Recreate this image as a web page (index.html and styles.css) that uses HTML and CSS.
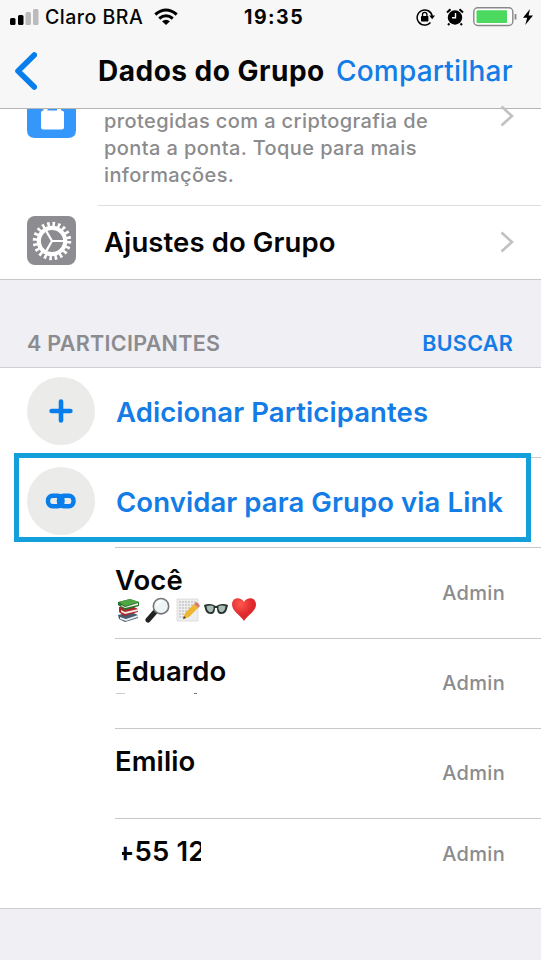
FILE: index.html
```html
<!DOCTYPE html>
<html lang="pt-BR">
<head>
<meta charset="utf-8">
<title>Dados do Grupo</title>
<link rel="stylesheet" href="styles.css">
</head>
<body>
<header class="top">
  <div class="status">
    <svg class="signal" width="29" height="18" viewBox="0 0 29 18"><rect x="0" y="10" width="5.5" height="7" rx="1.5"/><rect x="8" y="7" width="5.5" height="10" rx="1.5"/><rect x="15.5" y="4" width="5.5" height="13" rx="1.5" fill="#bbb"/><rect x="23" y="1" width="5.5" height="16" rx="1.5" fill="#bbb"/></svg>
    <span class="carrier">Claro BRA</span>
    <svg class="wifi" width="24" height="18" viewBox="0 0 24 18" fill="none" stroke="#000" stroke-width="3"><path d="M1.3 6.5Q12-2.5 22.7 6.5M5.2 10.5Q12 5 18.8 10.5"/><path d="M8 13.2Q12 10.2 16 13.2L12 17Z" fill="#000" stroke="none"/></svg>
    <span class="clock">19:35</span>
    <svg class="rotation" width="20" height="18" viewBox="0 0 20 18"><path d="M14.5 14.5A7.6 7.6 0 1 1 16.2 8" fill="none" stroke="#000" stroke-width="1.5"/><path d="M13.2 7.5H19L16.2 11.3Z"/><rect x="5" y="8" width="7.4" height="5.5" rx=".7"/><path d="M6.5 8V6.5a2.2 2.2 0 0 1 4.4 0V8" fill="none" stroke="#000" stroke-width="1.3"/></svg>
    <svg class="alarm" width="18" height="18" viewBox="0 0 18 18"><circle cx="9" cy="9.5" r="7.2"/><path d="M1 4.5L4.5 1.2M17 4.5L13.5 1.2M3.5 15.5L2 17M14.5 15.5L16 17" stroke="#000" stroke-width="2"/><path d="M9.5 5V9.8H6" fill="none" stroke="#fff" stroke-width="1.4"/></svg>
    <svg class="battery" width="45" height="20" viewBox="0 0 45 20"><rect x=".8" y=".8" width="39" height="17.7" rx="4" fill="#fff" stroke="#888" stroke-width="1.4"/><rect x="3.5" y="3.3" width="30.5" height="12.7" rx="1" fill="#4cd95f"/><path d="M42.5 7v5.5" stroke="#888" stroke-width="1.8"/></svg>
    <svg class="bolt" width="10" height="16" viewBox="0 0 10 16"><path d="M7 0L0 8.8H4.2L2.2 16L10 6.5H5.6Z"/></svg>
  </div>
  <nav class="nav">
    <svg class="back" width="24" height="38" viewBox="0 0 24 38"><path d="M21.3 3L5 19L21.3 35" fill="none" stroke="#087eec" stroke-width="5.6" stroke-linecap="round" stroke-linejoin="round"/></svg>
    <h1 class="title">Dados do Grupo</h1>
    <a class="share">Compartilhar</a>
  </nav>
</header>

<section class="settings">
  <div class="setting crypto">
    <svg class="tile" width="49" height="29" viewBox="0 0 49 29"><path d="M0 0H49V21Q49 29 41 29H8Q0 29 0 21Z" fill="#3697fb"/><rect x="14" y="1.5" width="23" height="19" rx="2.5" fill="#fff"/><path d="M18.5 0v3M32 0v3" stroke="#fff" stroke-width="4"/></svg>
    <p class="description">protegidas com a criptografia de<br>ponta a ponta. Toque para mais<br>informações.</p>
    <svg class="chevron" width="14" height="22" viewBox="0 0 14 22"><path d="M1.5 1.5L12 11L1.5 20.5"/></svg>
  </div>
  <div class="setting adjust">
    <svg class="tile" width="49" height="49" viewBox="0 0 49 49"><rect width="49" height="49" rx="8" fill="#8c8c91"/><g fill="none" stroke="#fff"><circle cx="25" cy="25" r="17" stroke-width="4.5" stroke-dasharray="2.55 2.79"/><circle cx="25" cy="25" r="13.2" stroke-width="4.2"/><path d="M25 25H37M25 25L19 14.6M25 25L19 35.4" stroke-width="2.2"/></g></svg>
    <span class="setting-name">Ajustes do Grupo</span>
    <svg class="chevron" width="14" height="22" viewBox="0 0 14 22"><path d="M1.5 1.5L12 11L1.5 20.5"/></svg>
  </div>
</section>

<div class="section-head"><span class="count">4 PARTICIPANTES</span><a class="search">BUSCAR</a></div>

<main class="people">
  <div class="row action">
    <span class="circle"><svg width="24" height="24" viewBox="0 0 24 24"><path d="M12 2.6V21.4M2.6 12H21.4" stroke="#087eec" stroke-width="4.6" stroke-linecap="round"/></svg></span>
    <div class="cell"><a class="add">Adicionar Participantes</a></div>
  </div>
  <div class="row action invite">
    <span class="circle"><svg width="32" height="16" viewBox="0 0 32 16" fill="none" stroke="#087eec" stroke-width="4.4"><rect x="3" y="2.8" width="14.5" height="10.5" rx="4.6"/><rect x="14" y="2.8" width="14.5" height="10.5" rx="4.6"/></svg></span>
    <div class="cell"><a class="link">Convidar para Grupo via Link</a></div>
  </div>
  <div class="row person">
    <div class="cell"><div class="info"><span class="name you">Você</span>
      <svg class="emojis" width="142" height="26" viewBox="0 0 142 26">
        <g transform="translate(2 1)"><path d="M0 17L13 14L20 17V20L7 24L1 21Z" fill="#475a70"/><path d="M2 19L8 21L20 17V19L8 23L2 21Z" fill="#e9ecec"/><path d="M1 9L14 8L20 11V14L6 18L1 14Z" fill="#ad2629"/><path d="M3 12L7 14L20 11V13L7 16L3 14Z" fill="#f2e6df"/><path d="M0 4L12 1L21 4V8L7 12L0 7Z" fill="#27702d"/><path d="M1 4L12 1L21 4L7 8Z" fill="#4fa744"/><path d="M3 7L7 9L20 5V7L7 10L3 8Z" fill="#edf0df"/></g>
        <g transform="translate(30 0)"><path d="M9 15L2 23" stroke="#222" stroke-width="5" stroke-linecap="round"/><circle cx="15" cy="9.2" r="7.7" fill="#edf4f6" stroke="#777" stroke-width="1.6"/><path d="M11 9Q12 4 16 4" fill="none" stroke="#fff" stroke-width="2"/></g>
        <g transform="translate(60 0)"><path d="M1 2H22V24H1Z" fill="#eee" stroke="#ccc" stroke-width=".6"/><path d="M3 5H20M3 8H20M3 11H16M3 14H13M3 17H10M3 20H8" stroke="#aaa" stroke-width=".9" stroke-dasharray="2 1"/><path d="M7 22L9 16L18 7L22 11L13 20Z" fill="#eeb633"/><path d="M18 7L20 5Q23 6 24 9L22 11Z" fill="#db7c6f"/><path d="M7 22L8 19L10 21Z" fill="#443a25"/></g>
        <g transform="translate(87 6)"><path d="M1 2Q6 0 11 2Q13 4 15 2Q20 0 25 2L24 6Q23 11 18 11Q14 11 14 5H12Q12 11 8 11Q3 11 2 6Z" fill="#26332f"/><path d="M3.5 3Q7 2 10.5 3Q11 9 7.5 9.3Q4 9 3.5 3ZM15.5 3Q19 2 22.5 3Q22 9 18.5 9.3Q15 9 15.5 3Z" fill="#a9bdb5"/></g>
        <defs><radialGradient id="heart" cx="35%" cy="25%"><stop stop-color="#ff5750"/><stop offset="1" stop-color="#df282c"/></radialGradient></defs>
        <path d="M128 24C124 18 116 14 116 7.5C116 0 125-.5 128 5C131-.5 140 0 140 7.5C140 14 132 18 128 24Z" fill="url(#heart)"/>
      </svg></div><span class="role">Admin</span></div>
  </div>
  <div class="row person">
    <div class="cell"><div class="info"><span class="name eduardo">Eduardo</span><svg class="trace" width="90" height="4" viewBox="0 0 90 4"><path d="M1 1.5h9" stroke="#ccc"/><path d="M79 1.5h3" stroke="#777"/></svg></div><span class="role">Admin</span></div>
  </div>
  <div class="row person">
    <div class="cell"><div class="info"><span class="name emilio">Emilio</span></div><span class="role">Admin</span></div>
  </div>
  <div class="row person last">
    <div class="cell"><div class="info"><span class="phone"><span class="number">+55 12</span></span></div><span class="role">Admin</span></div>
  </div>
</main>
</body>
</html>
```
FILE: styles.css
```css
*, *::after { box-sizing: border-box; }
body { margin: 0; width: 541px; height: 960px; overflow: hidden; background: #efeff4; color: #050505; font-family: Inter, "Liberation Sans", sans-serif; font-weight: 600; }
svg { display: block; flex: none; }
h1, p { margin: 0; }
span, a, h1 { white-space: nowrap; }

.top { height: 109px; background: #f7f7f7; border-bottom: 1px solid #b5b5b7; }
.status { height: 34px; display: flex; align-items: center; padding-left: 10px; }
.carrier { width: 100px; margin-left: 6px; font-size: 19.5px; font-weight: 500; letter-spacing: .5px; }
.wifi { margin-left: 9px; }
.clock { width: 60px; margin-left: 66px; font-size: 19.5px; font-weight: 700; letter-spacing: 1.5px; }
.rotation { margin-left: 112px; }
.alarm { margin-left: 10px; }
.battery { margin-left: 9px; }
.bolt { margin-left: 5px; }
.nav { height: 74px; display: flex; align-items: center; padding-left: 13px; }
.back { margin-top: -1px; }
.title { width: 227px; margin-left: 61px; font-size: 28px; font-weight: 700; letter-spacing: .5px; }
.share { margin-left: 11px; color: #137ce6; font-size: 28px; font-weight: 500; letter-spacing: .2px; }

.settings { height: 171px; background: #fff; border-bottom: 1px solid #c8c7cc; }
.setting { display: flex; padding-left: 27px; }
.crypto { height: 96px; }
.description { width: 375px; margin-left: 28px; margin-top: -1px; color: #8b8b8d; font-size: 20px; font-weight: 500; line-height: 27px; letter-spacing: .4px; }
.chevron { margin-left: 21px; fill: none; stroke: #c1c1c5; stroke-width: 2.6; }
.crypto .chevron { margin-top: -4px; }
.adjust { height: 72px; align-items: center; margin-left: 98px; padding-left: 0; border-top: 1px solid #dedee1; }
.adjust .tile { margin-left: -71px; margin-top: -3px; }
.setting-name { width: 375px; margin-left: 28px; font-size: 27.5px; letter-spacing: .1px; }

.section-head { height: 88px; display: flex; justify-content: space-between; align-items: flex-end; padding: 0 28px 10px 27px; border-bottom: 1px solid #cfced3; font-size: 21.5px; line-height: 27px; letter-spacing: .3px; }
.count { color: #8b8b90; }
.search { color: #137ce6; }

.people { height: 541px; background: #fff; border-bottom: 1px solid #cfced3; }
.row { display: flex; padding-left: 115px; height: 90.2px; }
.action { padding-left: 27px; align-items: stretch; }
.circle { width: 68px; height: 68px; margin-top: 9px; margin-right: 20px; flex: none; border-radius: 50%; background: #ebebe9; display: flex; align-items: center; justify-content: center; }
.cell { flex: 1; display: flex; justify-content: space-between; align-items: center; border-bottom: 1px solid #c8c7cc; }
.action a { margin-top: -1px; margin-left: 1px; color: #137ce6; font-size: 27.5px; letter-spacing: .09px; }
.action:first-child a { margin-top: -2px; }
.invite { position: relative; }
.invite::after { content: ""; position: absolute; left: 14px; top: -5px; width: 517px; height: 89px; border: 5px solid #139fd9; }
.info { align-self: flex-start; padding-top: 15px; }
.name, .phone { display: block; font-size: 27.5px; line-height: 34px; letter-spacing: .1px; }
.emojis { margin-left: 1px; }
.trace { margin-top: 4px; }
.role { margin-right: 36px; color: #8b8b8d; font-size: 20px; font-weight: 500; letter-spacing: .3px; }
.phone { width: 79px; margin-left: 7px; overflow: hidden; }
.number { margin-left: -6px; }
.last .cell { border: 0; }
.last .role { margin-top: -20px; }
```
